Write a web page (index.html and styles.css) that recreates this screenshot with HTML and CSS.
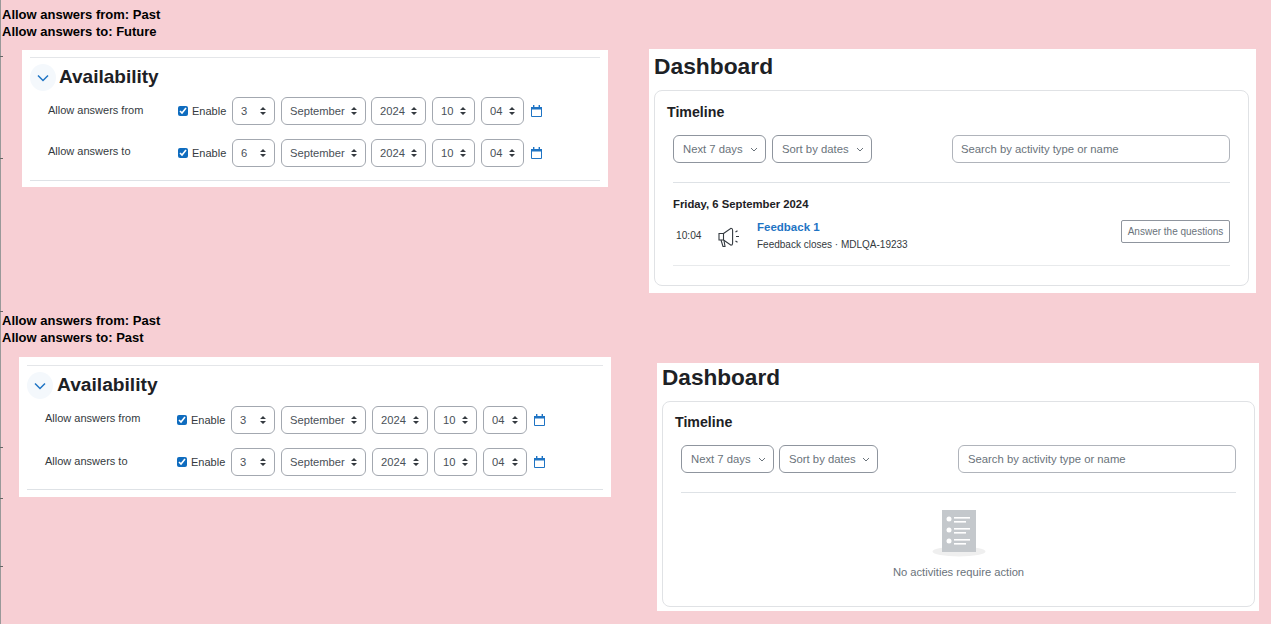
FILE: index.html
```html
<!DOCTYPE html>
<html lang="en">
<head>
<meta charset="utf-8">
<title>Availability and Dashboard timeline</title>
<link rel="stylesheet" href="styles.css">
</head>
<body>
<div class="rail"><i class="tick t1"></i><i class="tick t2"></i><i class="tick t3"></i><i class="tick t4"></i><i class="tick t5"></i><i class="tick t6"></i></div>

<p class="caption cap-a">Allow answers from: Past<br>Allow answers to: Future</p>

<section class="shot avail avail-a">
  <div class="avail-inner">
    <div class="avail-head">
      <span class="toggle"><svg width="12" height="8" viewBox="0 0 12 8"><path d="M1 1.500 6 6.500 11 1.500" fill="none" stroke="#1f74c4" stroke-width="1.500"/></svg></span>
      <h2>Availability</h2>
    </div>
    <div class="row">
      <span class="lbl">Allow answers from</span>
      <label class="enable"><input type="checkbox" checked>Enable</label>
      <select class="sel s-day"><option>3</option></select>
      <select class="sel s-mon"><option>September</option></select>
      <select class="sel s-yr"><option>2024</option></select>
      <select class="sel s-hr"><option>10</option></select>
      <select class="sel s-min"><option>04</option></select>
      <svg class="cal" width="11" height="12" viewBox="0 0 11 12"><path d="M.5 2.500h10v9H.5z" fill="#fff" stroke="#1f74c4"/><path d="M0 2h11v2.500H0zM2 0h1.400v2.500H2zM7.600 0H9v2.500H7.600z" fill="#1f74c4"/></svg>
    </div>
    <div class="row">
      <span class="lbl">Allow answers to</span>
      <label class="enable"><input type="checkbox" checked>Enable</label>
      <select class="sel s-day"><option>6</option></select>
      <select class="sel s-mon"><option>September</option></select>
      <select class="sel s-yr"><option>2024</option></select>
      <select class="sel s-hr"><option>10</option></select>
      <select class="sel s-min"><option>04</option></select>
      <svg class="cal" width="11" height="12" viewBox="0 0 11 12"><path d="M.5 2.500h10v9H.5z" fill="#fff" stroke="#1f74c4"/><path d="M0 2h11v2.500H0zM2 0h1.400v2.500H2zM7.600 0H9v2.500H7.600z" fill="#1f74c4"/></svg>
    </div>
  </div>
</section>

<section class="shot dash dash-b">
  <h1>Dashboard</h1>
  <div class="card">
    <h3>Timeline</h3>
    <div class="filters">
      <button class="drop d-next">Next 7 days<svg width="8" height="5" viewBox="0 0 8 5"><path d="M1 1 4 4 7 1" fill="none" stroke="#6a737b" stroke-width="1"/></svg></button>
      <button class="drop d-sort">Sort by dates<svg width="8" height="5" viewBox="0 0 8 5"><path d="M1 1 4 4 7 1" fill="none" stroke="#6a737b" stroke-width="1"/></svg></button>
      <input class="search" type="text" placeholder="Search by activity type or name">
    </div>
    <div class="results">
      <div class="date">Friday, 6 September 2024</div>
      <div class="event">
        <span class="time">10:04</span>
        <svg class="mega" width="22" height="21" viewBox="0 0 22 21"><g fill="none" stroke="#343a40" stroke-width="1.100"><path d="M1 6.500h4.500v6.500H1z"/><path d="M5.500 6.500 13 1.200q1.600 0 1.600 2v13q0 2-1.600 2L5.500 13"/><path d="M3 13l2 6.500h2L6 13.500"/><path d="M17.500 5l2-1.300M18 9.500h3M17.500 14l2 1.300"/></g></svg>
        <div class="event-text">
          <a class="ev-name">Feedback 1</a>
          <span class="ev-sub">Feedback closes · MDLQA-19233</span>
        </div>
        <button class="answer">Answer the questions</button>
      </div>
    </div>
  </div>
</section>

<p class="caption cap-c">Allow answers from: Past<br>Allow answers to: Past</p>

<section class="shot avail avail-c">
  <div class="avail-inner">
    <div class="avail-head">
      <span class="toggle"><svg width="12" height="8" viewBox="0 0 12 8"><path d="M1 1.500 6 6.500 11 1.500" fill="none" stroke="#1f74c4" stroke-width="1.500"/></svg></span>
      <h2>Availability</h2>
    </div>
    <div class="row">
      <span class="lbl">Allow answers from</span>
      <label class="enable"><input type="checkbox" checked>Enable</label>
      <select class="sel s-day"><option>3</option></select>
      <select class="sel s-mon"><option>September</option></select>
      <select class="sel s-yr"><option>2024</option></select>
      <select class="sel s-hr"><option>10</option></select>
      <select class="sel s-min"><option>04</option></select>
      <svg class="cal" width="11" height="12" viewBox="0 0 11 12"><path d="M.5 2.500h10v9H.5z" fill="#fff" stroke="#1f74c4"/><path d="M0 2h11v2.500H0zM2 0h1.400v2.500H2zM7.600 0H9v2.500H7.600z" fill="#1f74c4"/></svg>
    </div>
    <div class="row">
      <span class="lbl">Allow answers to</span>
      <label class="enable"><input type="checkbox" checked>Enable</label>
      <select class="sel s-day"><option>3</option></select>
      <select class="sel s-mon"><option>September</option></select>
      <select class="sel s-yr"><option>2024</option></select>
      <select class="sel s-hr"><option>10</option></select>
      <select class="sel s-min"><option>04</option></select>
      <svg class="cal" width="11" height="12" viewBox="0 0 11 12"><path d="M.5 2.500h10v9H.5z" fill="#fff" stroke="#1f74c4"/><path d="M0 2h11v2.500H0zM2 0h1.400v2.500H2zM7.600 0H9v2.500H7.600z" fill="#1f74c4"/></svg>
    </div>
  </div>
</section>

<section class="shot dash dash-d">
  <h1>Dashboard</h1>
  <div class="card">
    <h3>Timeline</h3>
    <div class="filters">
      <button class="drop d-next">Next 7 days<svg width="8" height="5" viewBox="0 0 8 5"><path d="M1 1 4 4 7 1" fill="none" stroke="#6a737b" stroke-width="1"/></svg></button>
      <button class="drop d-sort">Sort by dates<svg width="8" height="5" viewBox="0 0 8 5"><path d="M1 1 4 4 7 1" fill="none" stroke="#6a737b" stroke-width="1"/></svg></button>
      <input class="search" type="text" placeholder="Search by activity type or name">
    </div>
    <div class="empty">
      <svg width="54" height="48" viewBox="0 0 54 48"><ellipse cx="27" cy="42.500" rx="26.500" ry="5" fill="#efefef"/><rect x="10" y="1" width="34" height="42" fill="#c4c8cc"/><g fill="#fff"><circle cx="17" cy="10" r="2.500"/><circle cx="17" cy="21" r="2.500"/><circle cx="17" cy="32" r="2.500"/><rect x="22" y="8" width="16" height="1.600"/><rect x="22" y="12" width="12" height="1.600"/><rect x="22" y="19" width="16" height="1.600"/><rect x="22" y="23" width="12" height="1.600"/><rect x="22" y="30" width="16" height="1.600"/><rect x="22" y="34" width="12" height="1.600"/></g></svg>
      <span class="empty-text">No activities require action</span>
    </div>
  </div>
</section>
</body>
</html>
```

FILE: styles.css
```css
* { box-sizing: border-box; }
html, body { margin: 0; height: 624px; overflow: hidden; }
body { background: #f7cfd4; font-family: "Liberation Sans", Arial, sans-serif; color: #1d2125; position: relative; }

.rail { position: absolute; left: 0; top: 0; width: 1px; height: 624px; background: #999; }
.tick { position: absolute; left: 0; width: 3px; height: 1px; background: #666; }
.t1 { top: 56px; } .t2 { top: 158px; } .t3 { top: 311px; } .t4 { top: 447px; } .t5 { top: 498px; } .t6 { top: 566px; }

.caption { position: absolute; left: 2px; margin: 0; font-size: 13px; line-height: 17px; font-weight: 700; color: #000; }
.cap-a { top: 6px; }
.cap-c { top: 312px; }

.shot { position: absolute; background: #fff; }
.avail-a { left: 22px; top: 50px; width: 586px; height: 137px; }
.avail-c { left: 19px; top: 357px; width: 592px; height: 140px; }
.dash-b { left: 649px; top: 49px; width: 607px; height: 244px; padding: 0 7px 7px 5px; }
.dash-d { left: 657px; top: 363px; width: 602px; height: 248px; padding: 0 4px 4px 5px; }

/* Availability */
.avail-inner { margin: 7px 8px 0; border-top: 1px solid #e4e6e9; border-bottom: 1px solid #dee2e6; padding-top: 6px; height: 124px; }
.avail-c .avail-inner { margin-top: 8px; height: 125px; }
.avail-head { display: flex; align-items: center; height: 27px; margin-bottom: 6px; }
.avail-c .avail-head { margin-bottom: 7px; }
.toggle { width: 26px; height: 27px; border-radius: 50%; background: #f4f8fc; display: flex; align-items: center; justify-content: center; }
.avail-head h2 { margin: 0 0 2px 3px; font-size: 19px; line-height: 25px; font-weight: 700; }
.avail-c .avail-head h2 { margin-left: 4px; font-size: 19.200px; }
.row { display: flex; align-items: center; height: 28px; padding-left: 18px; margin-bottom: 14px; }
.lbl { width: 130px; font-size: 11px; padding-bottom: 3px; color: #343a40; }
.avail-c .lbl { width: 132px; }
.avail-a .row + .row .lbl { padding-bottom: 5px; }
.avail-c .avail-head + .row .lbl { padding-bottom: 5px; }
.enable { display: flex; align-items: center; width: 54px; font-size: 11px; color: #343a40; }
.enable input { width: 10px; height: 10px; margin: 0 4px 0 0; accent-color: #0f6cbf; }
.sel { appearance: none; -webkit-appearance: none; height: 28px; border: 1px solid #a3a8b0; border-radius: 6px; margin-right: 6px; padding: 0 0 0 8px; font: 11.200px "Liberation Sans", Arial, sans-serif; color: #495057; background: #fff url("data:image/svg+xml,%3Csvg xmlns='http://www.w3.org/2000/svg' width='7' height='9'%3E%3Cpath d='M3.500 0 7 3.500H0zM3.500 9 0 5.500h7z' fill='%23343a40'/%3E%3C/svg%3E") no-repeat right 8px center; background-size: 6px 8px; }
.s-day { width: 43px; }
.s-mon { width: 85px; margin-right: 5px; }
.s-yr { width: 55px; }
.s-hr { width: 43px; }
.s-min { width: 43px; margin-right: 7px; }
.avail-c .s-day { width: 44px; }
.avail-c .s-mon { margin-right: 6px; }
.avail-c .s-yr { width: 56px; }
.avail-c .s-min { width: 44px; }

/* Dashboard */
.dash h1 { margin: 0; font-size: 22.800px; line-height: 35px; height: 41px; font-weight: 700; }
.dash-d h1 { height: 38px; line-height: 30px; font-size: 22.600px; }
.card { border: 1px solid #e0e2e5; border-radius: 8px; padding: 12px 18px 0 12px; height: 196px; }
.dash-d .card { height: 206px; padding-top: 11px; }
.card h3 { margin: 0 0 14px; font-size: 14.200px; line-height: 18px; font-weight: 700; }
.filters { display: flex; align-items: center; margin-left: 6px; height: 28px; }
.drop { display: flex; align-items: center; justify-content: space-between; height: 28px; background: #fff; border: 1px solid #8f959e; border-radius: 6px; padding: 0 7px 0 9px; font: 11.300px "Liberation Sans", Arial, sans-serif; color: #6a737b; margin-right: 6px; }
.d-next { width: 93px; }
.d-sort { width: 100px; }
.dash-d .d-sort { width: 99px; margin-right: 80px; }
.dash-d .d-next { margin-right: 5px; }
.search { width: 278px; height: 28px; margin-left: 74px; border: 1px solid #b0b4bb; border-radius: 6px; padding: 0 8px; font: 11.300px "Liberation Sans", Arial, sans-serif; }
.dash-d .search { margin-left: 0; padding-left: 9px; }
.search::placeholder { color: #6a737b; opacity: 1; }

.results { margin: 19px 0 0 6px; border-top: 1px solid #dee2e6; border-bottom: 1px solid #e8eaec; height: 84px; padding-top: 14px; }
.date { font-size: 11.300px; font-weight: 700; line-height: 14px; }
.event { display: flex; align-items: center; height: 38px; margin-top: 5px; }
.time { width: 42px; padding: 0 0 0 3px; font-size: 10.200px; color: #343a40; }
.mega { width: 22px; margin: 5px 17px 0 3px; }
.event-text { flex: 1; display: flex; flex-direction: column; gap: 4px; }
.ev-name { font-size: 11.500px; line-height: 14px; font-weight: 700; color: #1f74c4; }
.ev-sub { font-size: 10px; line-height: 13px; color: #343a40; }
.answer { width: 109px; height: 23px; background: #fff; border: 1px solid #8f959e; border-radius: 2px; padding: 0; font: 10px "Liberation Sans", Arial, sans-serif; color: #6a737b; margin-bottom: 8px; }

.empty { margin: 19px 0 0 6px; border-top: 1px solid #dee2e6; display: flex; flex-direction: column; align-items: center; padding-top: 16px; }
.empty-text { margin-top: 8px; font-size: 11.200px; line-height: 14px; color: #6a737b; }
```
